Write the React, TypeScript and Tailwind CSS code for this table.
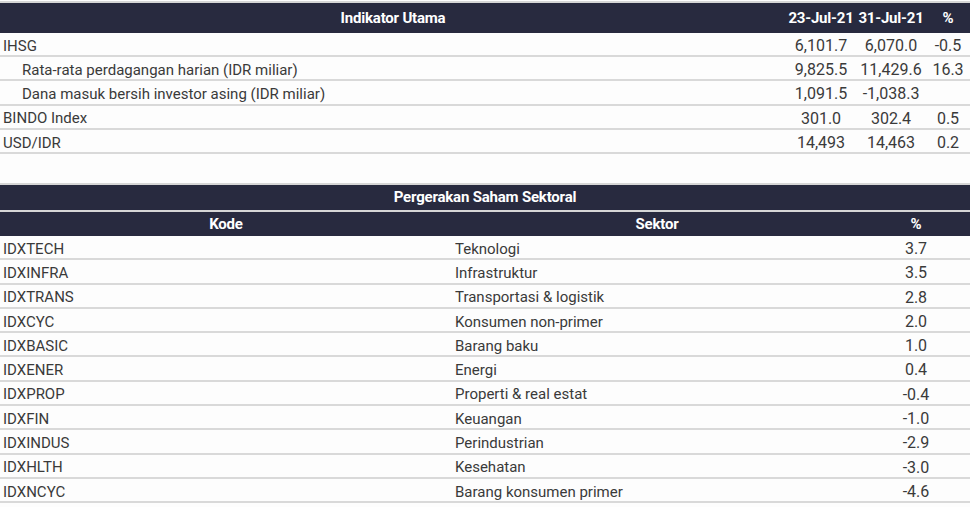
const indikator = [
  { label: 'IHSG', a: '6,101.7', b: '6,070.0', c: '-0.5', indent: false },
  { label: 'Rata-rata perdagangan harian (IDR miliar)', a: '9,825.5', b: '11,429.6', c: '16.3', indent: true },
  { label: 'Dana masuk bersih investor asing (IDR miliar)', a: '1,091.5', b: '-1,038.3', c: '', indent: true },
  { label: 'BINDO Index', a: '301.0', b: '302.4', c: '0.5', indent: false },
  { label: 'USD/IDR', a: '14,493', b: '14,463', c: '0.2', indent: false },
]

const sektoral = [
  ['IDXTECH', 'Teknologi', '3.7'],
  ['IDXINFRA', 'Infrastruktur', '3.5'],
  ['IDXTRANS', 'Transportasi & logistik', '2.8'],
  ['IDXCYC', 'Konsumen non-primer', '2.0'],
  ['IDXBASIC', 'Barang baku', '1.0'],
  ['IDXENER', 'Energi', '0.4'],
  ['IDXPROP', 'Properti & real estat', '-0.4'],
  ['IDXFIN', 'Keuangan', '-1.0'],
  ['IDXINDUS', 'Perindustrian', '-2.9'],
  ['IDXHLTH', 'Kesehatan', '-3.0'],
  ['IDXNCYC', 'Barang konsumen primer', '-4.6'],
]

const head = "font-['Roboto',sans-serif] font-bold text-white text-[15px] tracking-[-0.2px]"
const num = 'text-center text-[16px] tracking-normal'

export default function App() {
  return (
    <div className="w-[970px] h-[507px] bg-[#fdfdfd] text-[#3a3a3a] font-['Roboto',sans-serif] text-[15px] overflow-hidden">
      {/* Indikator Utama */}
      <div className="pt-[1px]">
        <div className="border-t-2 border-[#d6d6d6]" />
        <div className="grid grid-cols-[786px_70px_70px_44px] h-[30px] items-center bg-[#282a3f]">
          <div className={`${head} text-center`}>Indikator Utama</div>
          <div className={`${head} text-center`}>23-Jul-21</div>
          <div className={`${head} text-center`}>31-Jul-21</div>
          <div className={`${head} text-center`}>%</div>
        </div>
        {indikator.map((r) => (
          <div
            key={r.label}
            className="grid grid-cols-[786px_70px_70px_44px] h-[24.2px] items-center pt-[1px] border-b-2 border-[#d9d9d9]"
          >
            <div className={r.indent ? 'pl-[22px]' : 'pl-[3px]'}>{r.label}</div>
            <div className={num}>{r.a}</div>
            <div className={num}>{r.b}</div>
            <div className={num}>{r.c}</div>
          </div>
        ))}
      </div>

      {/* Pergerakan Saham Sektoral */}
      <div className="mt-[29px]">
        <div className="border-t-2 border-[#d6d6d6]" />
        <div className={`${head} bg-[#282a3f] h-[25px] flex items-center justify-center`}>
          Pergerakan Saham Sektoral
        </div>
        <div className="border-t-2 border-[#d6d6d6]" />
        <div className="grid grid-cols-[452px_410px_108px] h-[24px] items-center bg-[#282a3f]">
          <div className={`${head} text-center`}>Kode</div>
          <div className={`${head} text-center`}>Sektor</div>
          <div className={`${head} text-center`}>%</div>
        </div>
        {sektoral.map(([kode, sektor, pct]) => (
          <div
            key={kode}
            className="grid grid-cols-[452px_410px_108px] h-[24.3px] items-center pt-[1px] border-b-2 border-[#d9d9d9]"
          >
            <div className="pl-[3px]">{kode}</div>
            <div className="pl-[3px]">{sektor}</div>
            <div className={num}>{pct}</div>
          </div>
        ))}
      </div>
    </div>
  )
}
